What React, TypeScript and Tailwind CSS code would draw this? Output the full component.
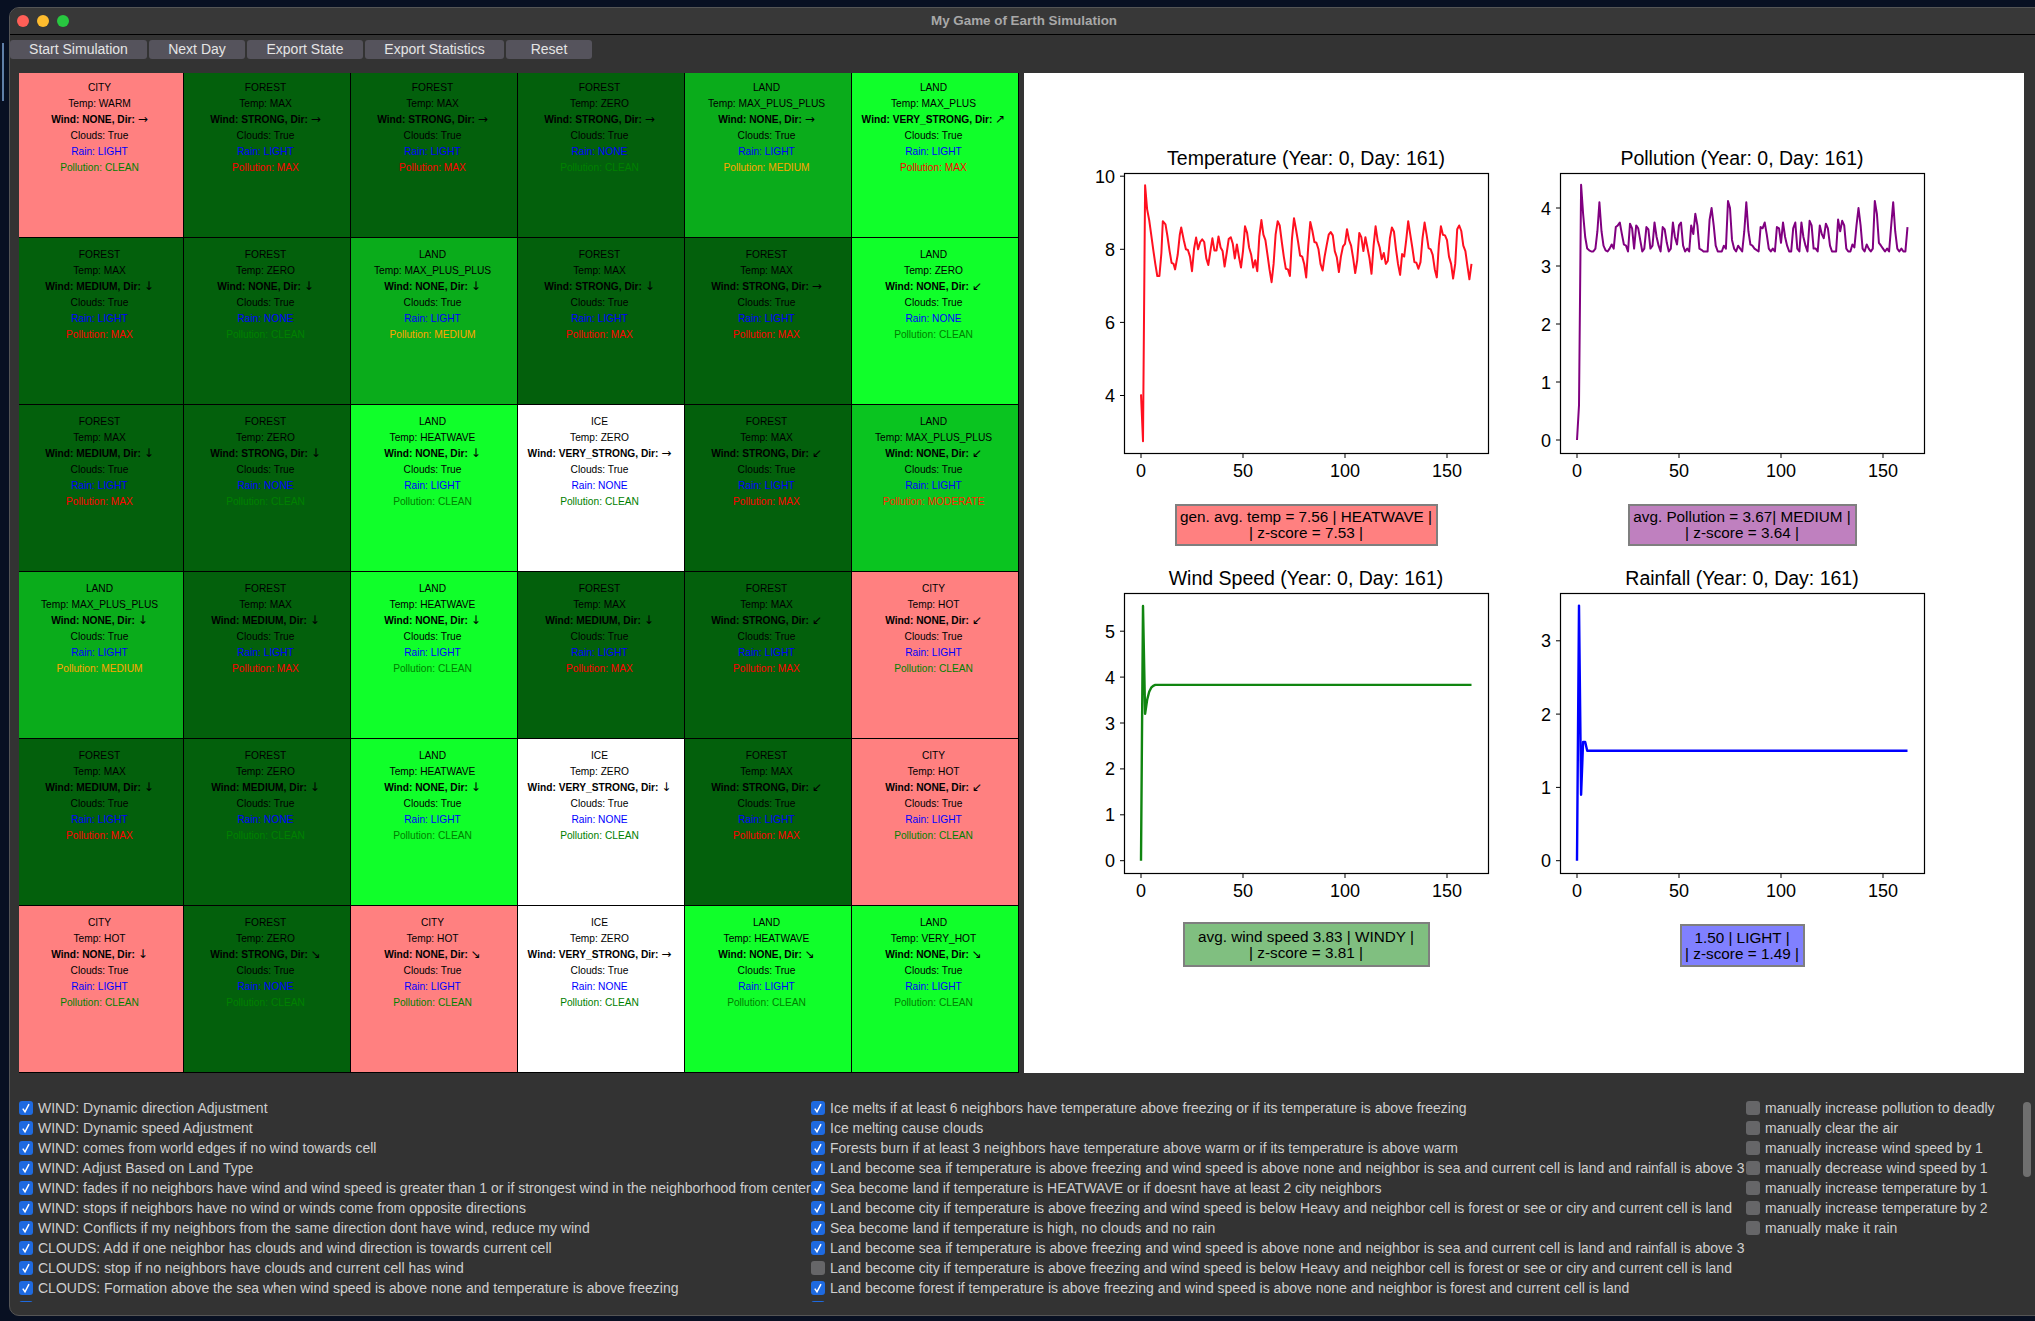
const CITY = "bg-[#ff8080]";
const FOREST = "bg-[#03600c]";
const LAND = "bg-[#10ff2a]";
const LAND_MID = "bg-[#0aac1b]";
const LAND_MOD = "bg-[#0ac420]";
const ICE = "bg-white";

type Cell = [string, string, string, string, string, string, string];

// type, bg, temp, wind, dir, rain, pollution
const cells: Cell[] = [
  ["CITY", CITY, "WARM", "NONE", "→", "LIGHT", "CLEAN"],
  ["FOREST", FOREST, "MAX", "STRONG", "→", "LIGHT", "MAX"],
  ["FOREST", FOREST, "MAX", "STRONG", "→", "LIGHT", "MAX"],
  ["FOREST", FOREST, "ZERO", "STRONG", "→", "NONE", "CLEAN"],
  ["LAND", LAND_MID, "MAX_PLUS_PLUS", "NONE", "→", "LIGHT", "MEDIUM"],
  ["LAND", LAND, "MAX_PLUS", "VERY_STRONG", "↗", "LIGHT", "MAX"],

  ["FOREST", FOREST, "MAX", "MEDIUM", "↓", "LIGHT", "MAX"],
  ["FOREST", FOREST, "ZERO", "NONE", "↓", "NONE", "CLEAN"],
  ["LAND", LAND_MID, "MAX_PLUS_PLUS", "NONE", "↓", "LIGHT", "MEDIUM"],
  ["FOREST", FOREST, "MAX", "STRONG", "↓", "LIGHT", "MAX"],
  ["FOREST", FOREST, "MAX", "STRONG", "→", "LIGHT", "MAX"],
  ["LAND", LAND, "ZERO", "NONE", "↙", "NONE", "CLEAN"],

  ["FOREST", FOREST, "MAX", "MEDIUM", "↓", "LIGHT", "MAX"],
  ["FOREST", FOREST, "ZERO", "STRONG", "↓", "NONE", "CLEAN"],
  ["LAND", LAND, "HEATWAVE", "NONE", "↓", "LIGHT", "CLEAN"],
  ["ICE", ICE, "ZERO", "VERY_STRONG", "→", "NONE", "CLEAN"],
  ["FOREST", FOREST, "MAX", "STRONG", "↙", "LIGHT", "MAX"],
  ["LAND", LAND_MOD, "MAX_PLUS_PLUS", "NONE", "↙", "LIGHT", "MODERATE"],

  ["LAND", LAND_MID, "MAX_PLUS_PLUS", "NONE", "↓", "LIGHT", "MEDIUM"],
  ["FOREST", FOREST, "MAX", "MEDIUM", "↓", "LIGHT", "MAX"],
  ["LAND", LAND, "HEATWAVE", "NONE", "↓", "LIGHT", "CLEAN"],
  ["FOREST", FOREST, "MAX", "MEDIUM", "↓", "LIGHT", "MAX"],
  ["FOREST", FOREST, "MAX", "STRONG", "↙", "LIGHT", "MAX"],
  ["CITY", CITY, "HOT", "NONE", "↙", "LIGHT", "CLEAN"],

  ["FOREST", FOREST, "MAX", "MEDIUM", "↓", "LIGHT", "MAX"],
  ["FOREST", FOREST, "ZERO", "MEDIUM", "↓", "NONE", "CLEAN"],
  ["LAND", LAND, "HEATWAVE", "NONE", "↓", "LIGHT", "CLEAN"],
  ["ICE", ICE, "ZERO", "VERY_STRONG", "↓", "NONE", "CLEAN"],
  ["FOREST", FOREST, "MAX", "STRONG", "↙", "LIGHT", "MAX"],
  ["CITY", CITY, "HOT", "NONE", "↙", "LIGHT", "CLEAN"],

  ["CITY", CITY, "HOT", "NONE", "↓", "LIGHT", "CLEAN"],
  ["FOREST", FOREST, "ZERO", "STRONG", "↘", "NONE", "CLEAN"],
  ["CITY", CITY, "HOT", "NONE", "↘", "LIGHT", "CLEAN"],
  ["ICE", ICE, "ZERO", "VERY_STRONG", "→", "NONE", "CLEAN"],
  ["LAND", LAND, "HEATWAVE", "NONE", "↘", "LIGHT", "CLEAN"],
  ["LAND", LAND, "VERY_HOT", "NONE", "↘", "LIGHT", "CLEAN"],
];

const pollutionClass: Record<string, string> = {
  CLEAN: "text-[#008000]",
  MAX: "text-[#ff0000]",
  MEDIUM: "text-[#ffa500]",
  MODERATE: "text-[#ff2a00]",
};

const tempData = [
  [0, 4.03], [1, 2.75], [2, 9.75], [3, 9.1], [4, 8.8], [5, 8.4], [6, 8.0], [7, 7.6], [8, 7.27], [9, 7.27], [10, 7.9], [10.7, 8.77],
  [12, 8.68], [13, 8.35], [14, 7.95], [15, 7.63], [16, 7.6], [16.7, 7.45], [18, 7.85], [19, 8.4], [19.7, 8.6], [21, 8.25], [22, 8.0],
  [23, 7.98], [24, 7.8], [25, 7.4], [26, 8.0], [27, 8.32], [28, 8.0], [29, 8.2], [30, 8.27], [31, 8.2], [32, 7.75], [33, 7.57], [34, 7.95],
  [35, 8.3], [36, 7.97], [37, 7.97], [38, 8.35], [39, 8.05], [40, 7.95], [41, 7.53], [42, 7.9], [43, 8.28], [44, 8.33], [45, 8.15], [46, 7.75],
  [47, 8.13], [48, 7.8], [49, 7.5], [50, 7.95], [51, 8.63], [52, 8.45], [53, 8.05], [54, 7.85], [55, 7.5], [56, 7.7], [57, 7.4], [58, 8.35],
  [59, 8.8], [60, 8.4], [61, 8.25], [62, 7.85], [63, 7.45], [64, 7.1], [65, 7.6], [66, 8.4], [67, 8.77], [68, 8.65], [69, 8.2], [70, 7.8],
  [71, 7.47], [72, 7.45], [73, 7.27], [74, 8.3], [75, 8.85], [76, 8.55], [77, 8.2], [78, 7.83], [79, 7.8], [80, 7.6], [81, 7.23], [82, 8.1],
  [83, 8.75], [84, 8.5], [85, 8.2], [86, 8.18], [87, 8.0], [88, 7.6], [89, 7.42], [90, 7.8], [91, 8.1], [92, 8.4], [93, 8.47], [94, 8.38],
  [95, 7.95], [96, 7.78], [97, 7.38], [98, 7.8], [99, 8.08], [100, 8.15], [101, 8.55], [102, 8.25], [103, 8.1], [104, 7.75], [105, 7.35],
  [106, 7.7], [107, 8.45], [108, 8.33], [109, 7.95], [110, 8.33], [111, 8.05], [112, 7.75], [113, 7.33], [114, 8.1], [115, 8.63], [116, 8.25],
  [117, 8.05], [118, 7.73], [119, 7.9], [120, 7.6], [121, 7.68], [122, 8.3], [123, 8.6], [124, 8.48], [125, 8.0], [126, 7.6], [127, 7.3],
  [128, 7.87], [129, 7.8], [130, 8.25], [131, 8.77], [132, 8.4], [133, 8.05], [134, 7.65], [135, 7.63], [136, 7.47], [137, 7.65], [138, 8.3],
  [139, 8.73], [140, 8.4], [141, 8.03], [142, 8.0], [143, 7.85], [144, 7.45], [145, 7.23], [146, 8.1], [147, 8.63], [148, 8.4], [149, 8.38],
  [150, 8.25], [151, 7.8], [152, 7.6], [153, 7.2], [154, 7.6], [155, 8.55], [156, 8.65], [157, 8.5], [158, 8.1], [159, 7.95], [160, 7.55],
  [161, 7.18], [162, 7.6],
];

const pollutionData = [
  [0, 0], [1, 0.6], [2, 4.4], [3, 3.9], [4, 3.5], [5, 3.3], [6, 3.27], [7, 3.25], [8, 3.25], [9, 3.3], [10, 3.6], [11, 4.1], [12, 3.6], [13, 3.35],
  [14, 3.27], [15, 3.25], [16, 3.3], [17, 3.37], [18, 3.3], [19, 3.67], [20, 3.7], [21, 3.75], [22, 3.55], [23, 3.37], [24, 3.35], [25, 3.25],
  [26, 3.73], [27, 3.65], [28, 3.3], [29, 3.7], [30, 3.65], [31, 3.45], [32, 3.25], [33, 3.3], [34, 3.67], [35, 3.63], [36, 3.3], [37, 3.35],
  [38, 3.75], [39, 3.5], [40, 3.35], [41, 3.25], [42, 3.67], [43, 3.63], [44, 3.4], [45, 3.25], [46, 3.3], [47, 3.75], [48, 3.5], [49, 3.37],
  [50, 3.7], [51, 3.75], [52, 3.35], [53, 3.25], [54, 3.3], [55, 3.25], [56, 3.7], [57, 3.55], [58, 3.9], [59, 3.7], [60, 3.3], [61, 3.28],
  [62, 3.25], [64, 3.25], [65, 3.8], [66, 4.0], [67, 3.7], [68, 3.35], [69, 3.25], [71, 3.25], [72, 3.35], [73, 3.3], [74, 4.12], [75, 4.0],
  [76, 3.45], [77, 3.3], [78, 3.25], [79, 3.35], [80, 3.3], [81, 3.25], [82, 3.6], [83, 4.1], [84, 3.6], [85, 3.37], [86, 3.35], [87, 3.3],
  [89, 3.25], [90, 3.67], [91, 3.65], [92, 3.75], [93, 3.55], [94, 3.3], [95, 3.25], [96, 3.3], [97, 3.25], [98, 3.67], [99, 3.65], [100, 3.4],
  [101, 3.75], [102, 3.5], [103, 3.35], [104, 3.25], [105, 3.25], [106, 3.65], [107, 3.75], [108, 3.3], [109, 3.25], [110, 3.75], [111, 3.5],
  [112, 3.35], [113, 3.25], [114, 3.78], [115, 3.7], [116, 3.3], [117, 3.3], [118, 3.25], [119, 3.7], [120, 3.55], [121, 3.48], [122, 3.73],
  [123, 3.65], [124, 3.35], [125, 3.25], [127, 3.25], [128, 3.8], [129, 3.6], [130, 3.78], [131, 3.7], [132, 3.3], [133, 3.25], [134, 3.25],
  [135, 3.37], [136, 3.32], [137, 3.7], [138, 4.0], [139, 3.7], [140, 3.3], [141, 3.25], [142, 3.37], [143, 3.3], [144, 3.25], [145, 3.3],
  [146, 4.12], [147, 3.9], [148, 3.4], [149, 3.35], [150, 3.3], [151, 3.25], [152, 3.3], [153, 3.25], [154, 3.7], [155, 4.1], [156, 3.6],
  [157, 3.3], [158, 3.25], [159, 3.3], [160, 3.25], [161, 3.25], [162, 3.67],
];

const windData = [[0, 0], [1, 5.55], [2, 3.2], [3, 3.5], [4, 3.68], [5, 3.77], [6, 3.81], [7, 3.83], [162, 3.83]];
const rainData = [[0, 0], [1, 3.48], [2, 0.9], [3, 1.62], [4, 1.62], [5, 1.5], [162, 1.5]];

type ChartProps = {
  title: string;
  data: number[][];
  color: string;
  zero: number; // svg y of value 0
  unit: number; // px per value
  ticks: number[];
  strokeWidth: number;
};

function Chart({ title, data, color, zero, unit, ticks, strokeWidth }: ChartProps) {
  const toX = (i: number) => 53 + i * 2.04;
  const toY = (v: number) => zero - v * unit;
  const points = data.map(([i, v]) => `${toX(i).toFixed(1)},${toY(v).toFixed(1)}`).join(" ");
  return (
    <svg width="436" height="347" className="block shrink-0">
      <text x="218" y="22" textAnchor="middle" fill="#000" className="text-[19.5px]">{title}</text>
      <rect x="36.5" y="30.5" width="364" height="280" fill="none" stroke="#000" strokeWidth="1.2" />
      {[0, 50, 100, 150].map((t) => (
        <g key={t}>
          <line x1={toX(t)} x2={toX(t)} y1="311" y2="315" stroke="#000" strokeWidth="1" />
          <text x={toX(t)} y="334" textAnchor="middle" fill="#000" className="text-[18px]">{t}</text>
        </g>
      ))}
      {ticks.map((t) => (
        <g key={t}>
          <line x1="32" x2="36" y1={toY(t)} y2={toY(t)} stroke="#000" strokeWidth="1" />
          <text x="27" y={toY(t) + 6.5} textAnchor="end" fill="#000" className="text-[18px]">{t}</text>
        </g>
      ))}
      <polyline points={points} fill="none" stroke={color} strokeWidth={strokeWidth} strokeLinejoin="round" />
    </svg>
  );
}

function InfoBox({ lines, className }: { lines: string[]; className: string }) {
  return (
    <div className={`border-2 border-[#7f7f7f] text-center text-[15.3px] leading-[16px] text-black flex flex-col justify-center whitespace-nowrap ${className}`}>
      {lines.map((l) => (
        <div key={l}>{l}</div>
      ))}
    </div>
  );
}

function CheckItem({ label, checked = true }: { label?: string; checked?: boolean }) {
  return (
    <div className="flex items-center h-[20px] gap-[5px] whitespace-nowrap">
      <div className={`w-[14px] h-[14px] rounded-[3px] shrink-0 ${checked ? "bg-[#1e6ae0]" : "bg-[#666668]"}`}>
        {checked && (
          <svg width="14" height="14" viewBox="0 0 14 14" fill="none">
            <path d="M3.8 7.6 L6 10.8 L10 3.2" stroke="#fff" strokeWidth="1.5" />
          </svg>
        )}
      </div>
      {label && <span>{label}</span>}
    </div>
  );
}

const col1 = [
  "WIND: Dynamic direction Adjustment",
  "WIND: Dynamic speed Adjustment",
  "WIND: comes from world edges if no wind towards cell",
  "WIND: Adjust Based on Land Type",
  "WIND: fades if no neighbors have wind and wind speed is greater than 1 or if strongest wind in the neighborhood from center",
  "WIND: stops if neighbors have no wind or winds come from opposite directions",
  "WIND: Conflicts if my neighbors from the same direction dont have wind, reduce my wind",
  "CLOUDS: Add if one neighbor has clouds and wind direction is towards current cell",
  "CLOUDS: stop if no neighbors have clouds and current cell has wind",
  "CLOUDS: Formation above the sea when wind speed is above none and temperature is above freezing",
];

const col2 = [
  "Ice melts if at least 6 neighbors have temperature above freezing or if its temperature is above freezing",
  "Ice melting cause clouds",
  "Forests burn if at least 3 neighbors have temperature above warm or if its temperature is above warm",
  "Land become sea if temperature is above freezing and wind speed is above none and neighbor is sea and current cell is land and rainfall is above 3",
  "Sea become land if temperature is HEATWAVE or if doesnt have at least 2 city neighbors",
  "Land become city if temperature is above freezing and wind speed is below Heavy and neighbor cell is forest or see or ciry and current cell is land",
  "Sea become land if temperature is high, no clouds and no rain",
  "Land become sea if temperature is above freezing and wind speed is above none and neighbor is sea and current cell is land and rainfall is above 3",
  "Land become city if temperature is above freezing and wind speed is below Heavy and neighbor cell is forest or see or ciry and current cell is land",
  "Land become forest if temperature is above freezing and wind speed is above none and neighbor is forest and current cell is land",
];

const col3 = [
  "manually increase pollution to deadly",
  "manually clear the air",
  "manually increase wind speed by 1",
  "manually decrease wind speed by 1",
  "manually increase temperature by 1",
  "manually increase temperature by 2",
  "manually make it rain",
];

const buttons = [
  ["Start Simulation", "w-[137px]"],
  ["Next Day", "w-[96px]"],
  ["Export State", "w-[116px]"],
  ["Export Statistics", "w-[139px]"],
  ["Reset", "w-[86px]"],
];

export default function App() {
  return (
    <div className="relative w-[2035px] h-[1321px] overflow-hidden bg-[#081022] pt-[7px] pl-[9px] font-['Liberation_Sans',Arial,sans-serif]">
      <div className="absolute left-[2px] top-[43px] w-[2px] h-[58px] bg-[#5f7fa8]"></div>
      <div className="w-[2040px] h-[1309px] bg-[#333333] rounded-[10px] border border-[#555] overflow-hidden">
        {/* title bar */}
        <div className="relative h-[27px] bg-[#383838] border-b border-black flex items-center justify-center">
          <div className="absolute left-[7px] top-[7px] flex gap-[8px]">
            <span className="w-[12px] h-[12px] rounded-full bg-[#ff5f57]"></span>
            <span className="w-[12px] h-[12px] rounded-full bg-[#febc2e]"></span>
            <span className="w-[12px] h-[12px] rounded-full bg-[#28c840]"></span>
          </div>
          <div className="text-[13.4px] font-bold text-[#a8a8a8] -ml-[10px]">My Game of Earth Simulation</div>
        </div>

        {/* toolbar */}
        <div className="flex gap-[2px] pt-[5px]">
          {buttons.map(([label, w]) => (
            <button key={label} className={`h-[19px] rounded-[3px] bg-[#55535c] text-[#e4e4e4] text-[14px] leading-[19px] text-center ${w}`}>
              {label}
            </button>
          ))}
        </div>

        {/* world + charts */}
        <div className="flex gap-[5px] mt-[14px] ml-[9px]">
          <div className="w-[1000px] h-[1000px] grid grid-cols-[165px_repeat(5,167px)] grid-rows-[165px_repeat(5,167px)]">
            {cells.map(([type, bg, temp, wind, dir, rain, pollution], i) => (
              <div
                key={i}
                className={`border-r border-b border-black text-center text-[10.2px] leading-[16px] text-black pr-[3px] ${bg} ${i < 6 ? "pt-[6.5px]" : "pt-[8.5px]"}`}
              >
                <div>{type}</div>
                <div>Temp: {temp}</div>
                <div className="font-bold">Wind: {wind}, Dir: <span className="font-normal font-['DejaVu_Sans'] text-[12px] leading-[0]">{dir}</span></div>
                <div>Clouds: True</div>
                <div className="text-[#0000ff]">Rain: {rain}</div>
                <div className={pollutionClass[pollution]}>Pollution: {pollution}</div>
              </div>
            ))}
          </div>

          <div className="w-[1000px] h-[1000px] bg-white pl-[64px] pt-[70px] grid grid-cols-[436px_436px] grid-rows-[420px_420px] content-start">
            <div className="flex flex-col items-center">
              <Chart title="Temperature (Year: 0, Day: 161)" data={tempData} color="#ff1020" zero={106.3 + 8 * 36.55} unit={36.55} ticks={[4, 6, 8, 10]} strokeWidth={2} />
              <InfoBox className="mt-[14px] w-[263px] h-[42px] bg-[#ff8080]" lines={["gen. avg. temp = 7.56 | HEATWAVE |", "| z-score = 7.53 |"]} />
            </div>
            <div className="flex flex-col items-center">
              <Chart title="Pollution (Year: 0, Day: 161)" data={pollutionData} color="#800080" zero={297} unit={58} ticks={[0, 1, 2, 3, 4]} strokeWidth={2} />
              <InfoBox className="mt-[14px] w-[229px] h-[42px] bg-[#bf80bf]" lines={["avg. Pollution = 3.67| MEDIUM |", "| z-score = 3.64 |"]} />
            </div>
            <div className="flex flex-col items-center">
              <Chart title="Wind Speed (Year: 0, Day: 161)" data={windData} color="#108510" zero={297.7} unit={45.9} ticks={[0, 1, 2, 3, 4, 5]} strokeWidth={2.4} />
              <InfoBox className="mt-[12px] w-[247px] h-[45px] bg-[#80bf80]" lines={["avg. wind speed 3.83 | WINDY |", "| z-score = 3.81 |"]} />
            </div>
            <div className="flex flex-col items-center">
              <Chart title="Rainfall (Year: 0, Day: 161)" data={rainData} color="#0000ff" zero={297.7} unit={73.3} ticks={[0, 1, 2, 3]} strokeWidth={2.4} />
              <InfoBox className="mt-[14px] w-[125px] h-[43px] bg-[#8080ff]" lines={["1.50 | LIGHT |", "| z-score = 1.49 |"]} />
            </div>
          </div>
        </div>

        {/* rule checkboxes */}
        <div className="relative mt-[25px] h-[204px] overflow-hidden flex pl-[9px] text-[14px] text-[#cfcfcf]">
          <div className="w-[792px] shrink-0">
            {col1.map((l) => (
              <CheckItem key={l} label={l} />
            ))}
            <CheckItem />
          </div>
          <div className="w-[935px] shrink-0">
            {col2.map((l, i) => (
              <CheckItem key={i} label={l} checked={i !== 8} />
            ))}
            <CheckItem />
          </div>
          <div className="shrink-0">
            {col3.map((l) => (
              <CheckItem key={l} label={l} checked={false} />
            ))}
          </div>
          <div className="absolute left-[2013px] top-[4px] w-[8px] h-[75px] rounded-full bg-[#6f6f6f]"></div>
        </div>
      </div>
    </div>
  );
}
